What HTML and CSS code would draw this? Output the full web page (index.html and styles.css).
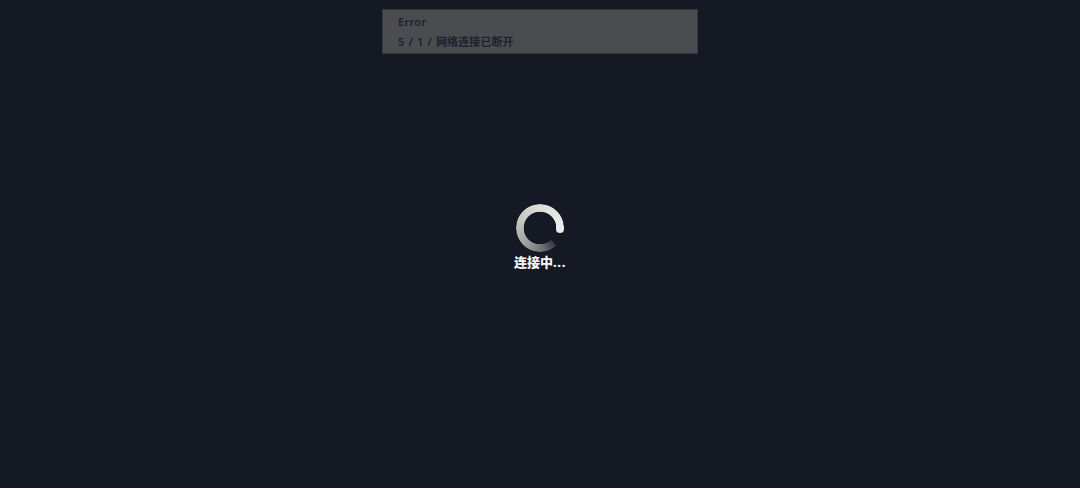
FILE: index.html
```
<!DOCTYPE html>
<html lang="zh-CN">
<head>
    <meta charset="UTF-8">
    <meta name="viewport" content="width=device-width, initial-scale=1.0">
    <title>连接中</title>
    <link rel="stylesheet" href="styles.css">
</head>
<body>
    <div class="screen">
        <div class="toast">
            <div class="toast-title">Error</div>
            <div class="toast-message">5 / 1 / 网络连接已断开</div>
        </div>

        <div class="loading">
            <div class="spinner">
                <div class="spinner-ring"></div>
                <div class="spinner-cap"></div>
            </div>
            <div class="loading-text">连接中<span class="dots">...</span></div>
        </div>
    </div>
</body>
</html>
```

FILE: styles.css
```
body {
    margin: 0;
    font-family: 'Noto Sans', 'Noto Sans CJK SC', sans-serif;
    background: #141924;
}

.screen {
    height: 100vh;
    box-sizing: border-box;
    padding-top: 9px;
    border-bottom: 2px solid #161425;
    display: flex;
    flex-direction: column;
    align-items: center;
    overflow: hidden;
}

.toast {
    width: 316px;
    height: 45px;
    box-sizing: border-box;
    padding: 2px 15px;
    background: #4b4c50;
    border: 1px solid #353843;
    color: #1d212e;
    font-size: 11px;
    font-weight: 600;
    line-height: 20px;
}

.toast-title {
    letter-spacing: 0.3px;
}

.toast-message {
    letter-spacing: 0.1px;
    word-spacing: 1.1px;
}

.loading {
    margin-top: 150px;
    display: flex;
    flex-direction: column;
    align-items: center;
}

.spinner {
    position: relative;
    width: 48px;
    height: 48px;
}

.spinner-ring {
    width: 48px;
    height: 48px;
    border-radius: 50%;
    background: conic-gradient(from 137deg, #343842 0deg, #77777a 40deg, #a3a3a2 90deg, #c4c4c1 150deg, #deded9 220deg, #ececea 315deg, transparent 316deg);
    -webkit-mask: radial-gradient(circle, transparent 16px, #000 16.6px);
    mask: radial-gradient(circle, transparent 16px, #000 16.6px);
}

/* rounded head of the ring */
.spinner-cap {
    position: absolute;
    top: 21px;
    right: 0;
    width: 8px;
    height: 8px;
    border-radius: 50%;
    background: #ececea;
}

.loading-text {
    color: #f4f5f7;
    font-size: 13px;
    font-weight: 800;
    line-height: 20px;
}

.dots {
    letter-spacing: 0.6px;
}
```
